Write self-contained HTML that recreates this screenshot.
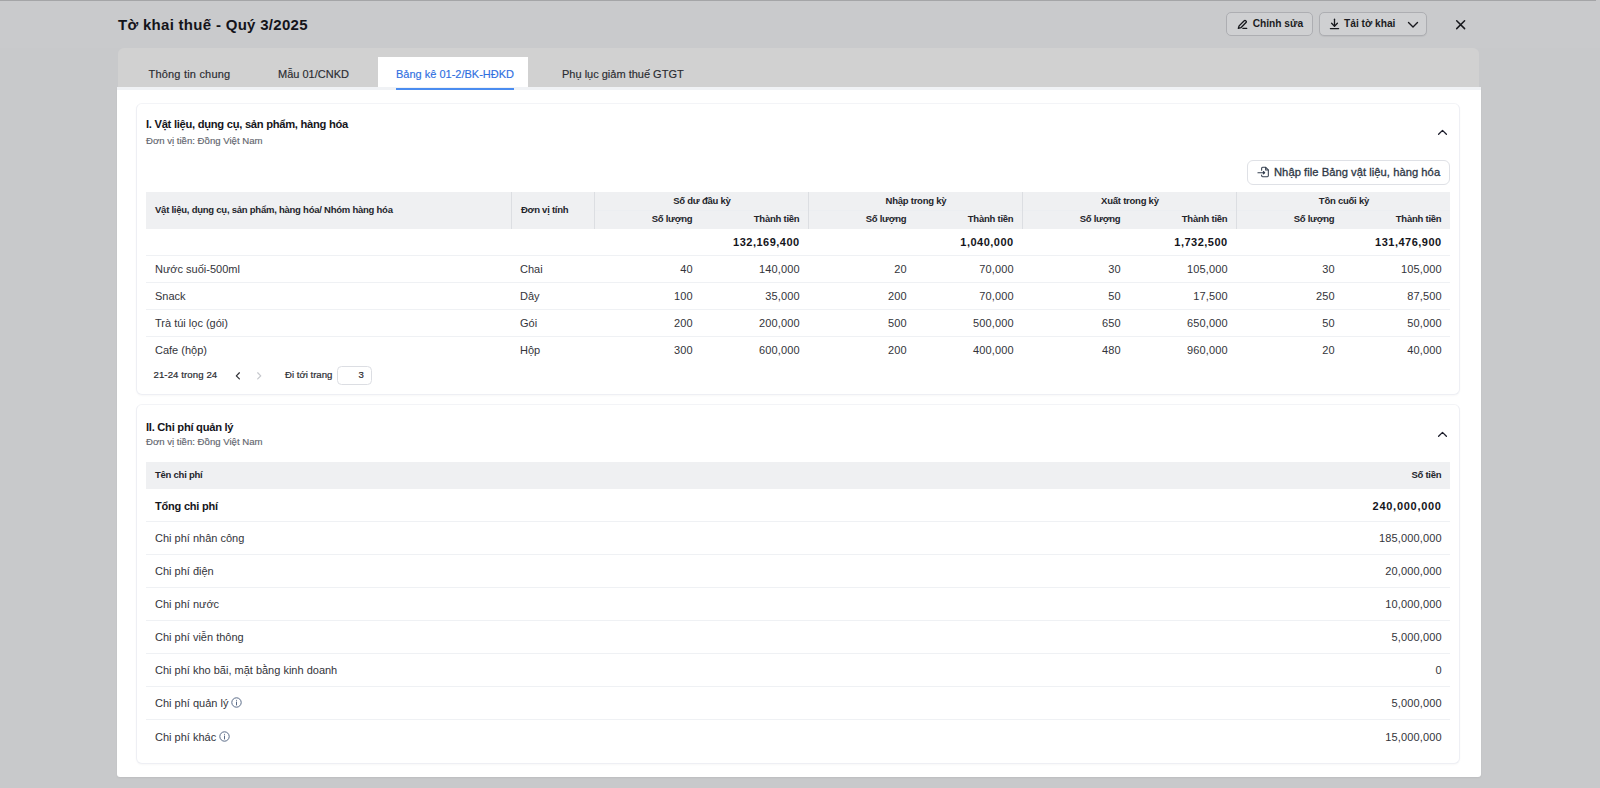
<!DOCTYPE html>
<html lang="vi">
<head>
<meta charset="utf-8">
<title>Tờ khai thuế - Quý 3/2025</title>
<style>
*{box-sizing:border-box;margin:0;padding:0}
html,body{width:1600px;height:788px;overflow:hidden}
body{background:#c8c9cb;font-family:"Liberation Sans",sans-serif;color:#2b2d33;position:relative;font-size:11px}
.abs{position:absolute}
#topline{left:0;top:0;width:1596px;height:1px;background:#a4a5a7}
#hband{left:0;top:1px;width:1600px;height:47px;background:#c9cacc}
#title{left:118px;top:15px;font-size:15px;font-weight:bold;color:#14141a;line-height:20px;white-space:nowrap;letter-spacing:0.3px}
.btn{top:12px;height:24px;border:1px solid #adaeb2;border-radius:5px;background:#cfd0d2;font-size:10.2px;font-weight:bold;color:#1b1c22;line-height:22.6px;white-space:nowrap}
#tabbar{left:118px;top:48px;width:1360.5px;height:40px;background:#d1d1d1;border-radius:6px 6px 0 0}
.tab{top:67px;font-size:11px;line-height:14px;color:#2a2b30;white-space:nowrap;-webkit-text-stroke:0.15px currentColor}
#tabactive{left:378px;top:57px;width:150px;height:31px;background:#fff}
#content{left:117px;top:87px;width:1364px;height:690px;box-shadow:0 1px 2px rgba(0,0,0,0.06);background:#fff;border-top:3px solid #f0f2f5;border-radius:0 0 3px 3px}
#underline{left:396px;top:87.5px;width:118px;height:2px;background:#4a8cf0}
.card{left:136px;width:1324px;background:#fff;border:1px solid #eeeff4;border-top-color:#f3f4f7;border-radius:6px;box-shadow:0 1px 2px rgba(20,20,40,0.03)}
.h1{font-size:11.2px;letter-spacing:-0.28px;font-weight:bold;color:#15151b;line-height:14px;white-space:nowrap}
.sub{font-size:9.6px;color:#62666e;-webkit-text-stroke:0.15px #62666e;line-height:12px;white-space:nowrap}
table{border-collapse:separate;border-spacing:0;table-layout:fixed;position:absolute}
th{font-size:9.5px;letter-spacing:-0.24px;font-weight:bold;color:#24252b;background:#eff0f2;white-space:nowrap}
td{font-size:11px;color:#33343a;white-space:nowrap;border-bottom:1px solid #eff1f4}
.r{text-align:right}.l{text-align:left}.c{text-align:center}
.b{font-weight:bold;color:#15151b}
td.l.b,td.b:first-child{letter-spacing:-0.2px}
td.r{letter-spacing:0.15px}
td.r.b{letter-spacing:0.5px}

.chev{left:1437.2px}
#imp{left:1247px;top:160px;width:203px;height:24.5px;border:1px solid #dfe1e6;border-radius:6px;background:#fff;font-size:11.2px;letter-spacing:0.04px;font-weight:normal;-webkit-text-stroke:0.3px #2e3846;color:#2e3846;line-height:22.5px;white-space:nowrap}
#t1{left:146px;top:192px;width:1304.4px}
#t1 tr.hr2 th{padding-bottom:2px}
#t1 tr.hr1 th{padding-bottom:1px}
#t1 tr.hr1 th[rowspan]{padding-bottom:1px}
#t1 tr.hr1 th[colspan]{box-shadow:inset 0 -1px 0 #eceef1}
#t1 th{height:18.5px;line-height:12px;padding:0 9px 0 9px;vertical-align:middle}
#t1 th.bl{border-left:1px solid #dcdee2}
#t1 td{height:27px;padding:0 8.7px 0.5px 9px;line-height:14px;vertical-align:middle}
#t1 tr:last-child td{border-bottom:none}
.pg{font-size:9.6px;color:#2a2b31;line-height:12px;white-space:nowrap;top:369.4px;letter-spacing:0.1px;-webkit-text-stroke:0.2px #2a2b31}
#t2{left:146px;top:462px;width:1304.4px}
#t2 th{height:27px;line-height:12px;padding:0 9px 0.6px 9px;vertical-align:middle}
#t2 td{height:33px;padding:0.4px 8.7px 0 9px;line-height:14px;vertical-align:middle}
#t2 tr:last-child td{border-bottom:none}
#t2 tr:nth-child(2) td{padding-top:1.6px}
#t2 td.r.b{letter-spacing:0.72px}
.info{display:inline-block;vertical-align:-1px;margin-left:2.4px}
</style>
</head>
<body>
<div id="hband" class="abs"></div>
<div id="topline" class="abs"></div>
<div id="title" class="abs">Tờ khai thuế - Quý 3/2025</div>


<div class="abs btn" style="left:1226px;width:87px"><svg class="abs" style="left:9.5px;top:5.5px" width="11.4" height="10.5" viewBox="0 0 12 11" fill="none" stroke="#17181d" stroke-width="1.45" stroke-linecap="round" stroke-linejoin="round"><path d="M2.2 7.2 L7.6 1.8 a1.1 1.1 0 0 1 1.6 0 l0.3 0.3 a1.1 1.1 0 0 1 0 1.6 L4.1 9.1 L1.4 9.8 Z"/><path d="M6.2 9.8 H10.2"/></svg><span class="abs" style="left:25.7px;top:0">Chỉnh sửa</span></div>
<div class="abs btn" style="left:1319px;width:108px;box-shadow:0 1px 1px rgba(0,0,0,0.06)"><svg class="abs" style="left:9px;top:5px" width="11" height="12" viewBox="0 0 11 12" fill="none" stroke="#17181d" stroke-width="1.3" stroke-linecap="round" stroke-linejoin="round"><path d="M5.5 1.2 V8"/><path d="M2.6 5.3 L5.5 8.2 L8.4 5.3"/><path d="M1.4 10.6 H9.6"/></svg><span class="abs" style="left:24px;top:0">Tải tờ khai</span><svg class="abs" style="left:86.5px;top:8px" width="12" height="8" viewBox="0 0 12 8" fill="none" stroke="#17181d" stroke-width="1.4" stroke-linecap="round" stroke-linejoin="round"><path d="M1.5 1.5 L6 6 L10.5 1.5"/></svg></div>
<svg class="abs" style="left:1454px;top:18px" width="13" height="13" viewBox="0 0 13 13" fill="none" stroke="#17181d" stroke-width="1.5" stroke-linecap="round"><path d="M2.7 2.7 L10.6 10.6 M10.6 2.7 L2.7 10.6"/></svg>

<div id="tabbar" class="abs"></div>
<div id="tabactive" class="abs"></div>
<div id="content" class="abs"></div>
<div id="underline" class="abs"></div>
<div class="abs tab" style="left:148.5px;letter-spacing:0.2px">Thông tin chung</div>
<div class="abs tab" style="left:278px">Mẫu 01/CNKD</div>
<div class="abs tab" style="left:396px;color:#2f6fdf">Bảng kê 01-2/BK-HĐKD</div>
<div class="abs tab" style="left:562px">Phụ lục giảm thuế GTGT</div>

<div class="abs card" style="top:103px;height:292px"></div>
<div class="abs card" style="top:404px;height:360px"></div>

<div class="abs h1" style="left:146px;top:117.4px">I. Vật liệu, dụng cụ, sản phẩm, hàng hóa</div>
<div class="abs sub" style="left:146px;top:134.5px">Đơn vị tiền: Đồng Việt Nam</div>
<svg class="abs chev" style="top:129.1px" width="11" height="7" viewBox="0 0 11 7" fill="none" stroke="#1c1d2b" stroke-width="1.3" stroke-linecap="round" stroke-linejoin="round"><path d="M1.6 5.2 L5.5 1.4 L9.4 5.2"/></svg>
<div id="imp" class="abs"><svg class="abs" style="left:9px;top:5.3px" width="13" height="12.1" viewBox="0 0 14 13" fill="none" stroke="#364050" stroke-width="1.15" stroke-linecap="round" stroke-linejoin="round"><path d="M5 4.6 V2.4 a1 1 0 0 1 1 -1 H9.4 L12.2 4.2 V10.6 a1 1 0 0 1 -1 1 H6 a1 1 0 0 1 -1 -1 V9.6"/><path d="M9.3 1.6 V4.3 H12"/><path d="M1 7.2 H8"/><path d="M6.9 5.9 L8.3 7.2 L6.9 8.5 Z" fill="#364050"/></svg><span class="abs" style="left:26px;top:0">Nhập file Bảng vật liệu, hàng hóa</span></div>
<table id="t1">
<colgroup><col style="width:365px"><col style="width:83.4px"><col style="width:107px"><col style="width:107px"><col style="width:107px"><col style="width:107px"><col style="width:107px"><col style="width:107px"><col style="width:107px"><col style="width:107px"></colgroup>
<tr class="hr1"><th rowspan="2" class="l">Vật liệu, dụng cụ, sản phẩm, hàng hóa/ Nhóm hàng hóa</th><th rowspan="2" class="l bl">Đơn vị tính</th><th colspan="2" class="c bl">Số dư đầu kỳ</th><th colspan="2" class="c bl">Nhập trong kỳ</th><th colspan="2" class="c bl">Xuất trong kỳ</th><th colspan="2" class="c bl">Tồn cuối kỳ</th></tr>
<tr class="hr2"><th class="r bl">Số lượng</th><th class="r">Thành tiền</th><th class="r bl">Số lượng</th><th class="r">Thành tiền</th><th class="r bl">Số lượng</th><th class="r">Thành tiền</th><th class="r bl">Số lượng</th><th class="r">Thành tiền</th></tr>
<tr><td></td><td></td><td></td><td class="r b">132,169,400</td><td></td><td class="r b">1,040,000</td><td></td><td class="r b">1,732,500</td><td></td><td class="r b">131,476,900</td></tr>
<tr><td>Nước suối-500ml</td><td>Chai</td><td class="r">40</td><td class="r">140,000</td><td class="r">20</td><td class="r">70,000</td><td class="r">30</td><td class="r">105,000</td><td class="r">30</td><td class="r">105,000</td></tr>
<tr><td>Snack</td><td>Dây</td><td class="r">100</td><td class="r">35,000</td><td class="r">200</td><td class="r">70,000</td><td class="r">50</td><td class="r">17,500</td><td class="r">250</td><td class="r">87,500</td></tr>
<tr><td>Trà túi lọc (gói)</td><td>Gói</td><td class="r">200</td><td class="r">200,000</td><td class="r">500</td><td class="r">500,000</td><td class="r">650</td><td class="r">650,000</td><td class="r">50</td><td class="r">50,000</td></tr>
<tr><td>Cafe (hộp)</td><td>Hộp</td><td class="r">300</td><td class="r">600,000</td><td class="r">200</td><td class="r">400,000</td><td class="r">480</td><td class="r">960,000</td><td class="r">20</td><td class="r">40,000</td></tr>
</table>
<div class="abs pg" style="left:153.5px">21-24 trong 24</div>
<svg class="abs" style="left:234.3px;top:370.8px" width="8.1" height="9.9" viewBox="0 0 9 11" fill="none" stroke="#2f3036" stroke-width="1.4" stroke-linecap="round" stroke-linejoin="round"><path d="M6 2 L2.6 5.4 L6 8.8"/></svg>
<svg class="abs" style="left:254.6px;top:370.8px" width="8.1" height="9.9" viewBox="0 0 9 11" fill="none" stroke="#c6c8cd" stroke-width="1.4" stroke-linecap="round" stroke-linejoin="round"><path d="M3 2 L6.4 5.4 L3 8.8"/></svg>
<div class="abs pg" style="left:285px;letter-spacing:0">Đi tới trang</div>
<div class="abs" style="left:337px;top:366px;width:35px;height:18.5px;border:1px solid #dcdee3;border-radius:4.5px;background:#fff"></div>
<div class="abs pg" style="left:358.5px">3</div>

<div class="abs h1" style="left:146px;top:419.5px">II. Chi phí quản lý</div>
<div class="abs sub" style="left:146px;top:436px">Đơn vị tiền: Đồng Việt Nam</div>
<svg class="abs chev" style="top:430.8px" width="11" height="7" viewBox="0 0 11 7" fill="none" stroke="#1c1d2b" stroke-width="1.3" stroke-linecap="round" stroke-linejoin="round"><path d="M1.6 5.2 L5.5 1.4 L9.4 5.2"/></svg>
<table id="t2">
<colgroup><col style="width:900px"><col></colgroup>
<tr><th class="l">Tên chi phí</th><th class="r">Số tiền</th></tr>
<tr><td class="b">Tổng chi phí</td><td class="r b">240,000,000</td></tr>
<tr><td>Chi phí nhân công</td><td class="r">185,000,000</td></tr>
<tr><td>Chi phí điện</td><td class="r">20,000,000</td></tr>
<tr><td>Chi phí nước</td><td class="r">10,000,000</td></tr>
<tr><td>Chi phí viễn thông</td><td class="r">5,000,000</td></tr>
<tr><td>Chi phí kho bãi, mặt bằng kinh doanh</td><td class="r">0</td></tr>
<tr><td>Chi phí quản lý<svg class="info" width="11" height="11" viewBox="0 0 11 11" fill="none" stroke="#596a86" stroke-width="1"><circle cx="5.5" cy="5.5" r="4.7"/><path d="M5.5 5 V8" stroke-linecap="round"/><circle cx="5.5" cy="3.3" r="0.55" fill="#596a86" stroke="none"/></svg></td><td class="r">5,000,000</td></tr>
<tr><td>Chi phí khác<svg class="info" width="11" height="11" viewBox="0 0 11 11" fill="none" stroke="#596a86" stroke-width="1"><circle cx="5.5" cy="5.5" r="4.7"/><path d="M5.5 5 V8" stroke-linecap="round"/><circle cx="5.5" cy="3.3" r="0.55" fill="#596a86" stroke="none"/></svg></td><td class="r">15,000,000</td></tr>
</table>

</body>
</html>
